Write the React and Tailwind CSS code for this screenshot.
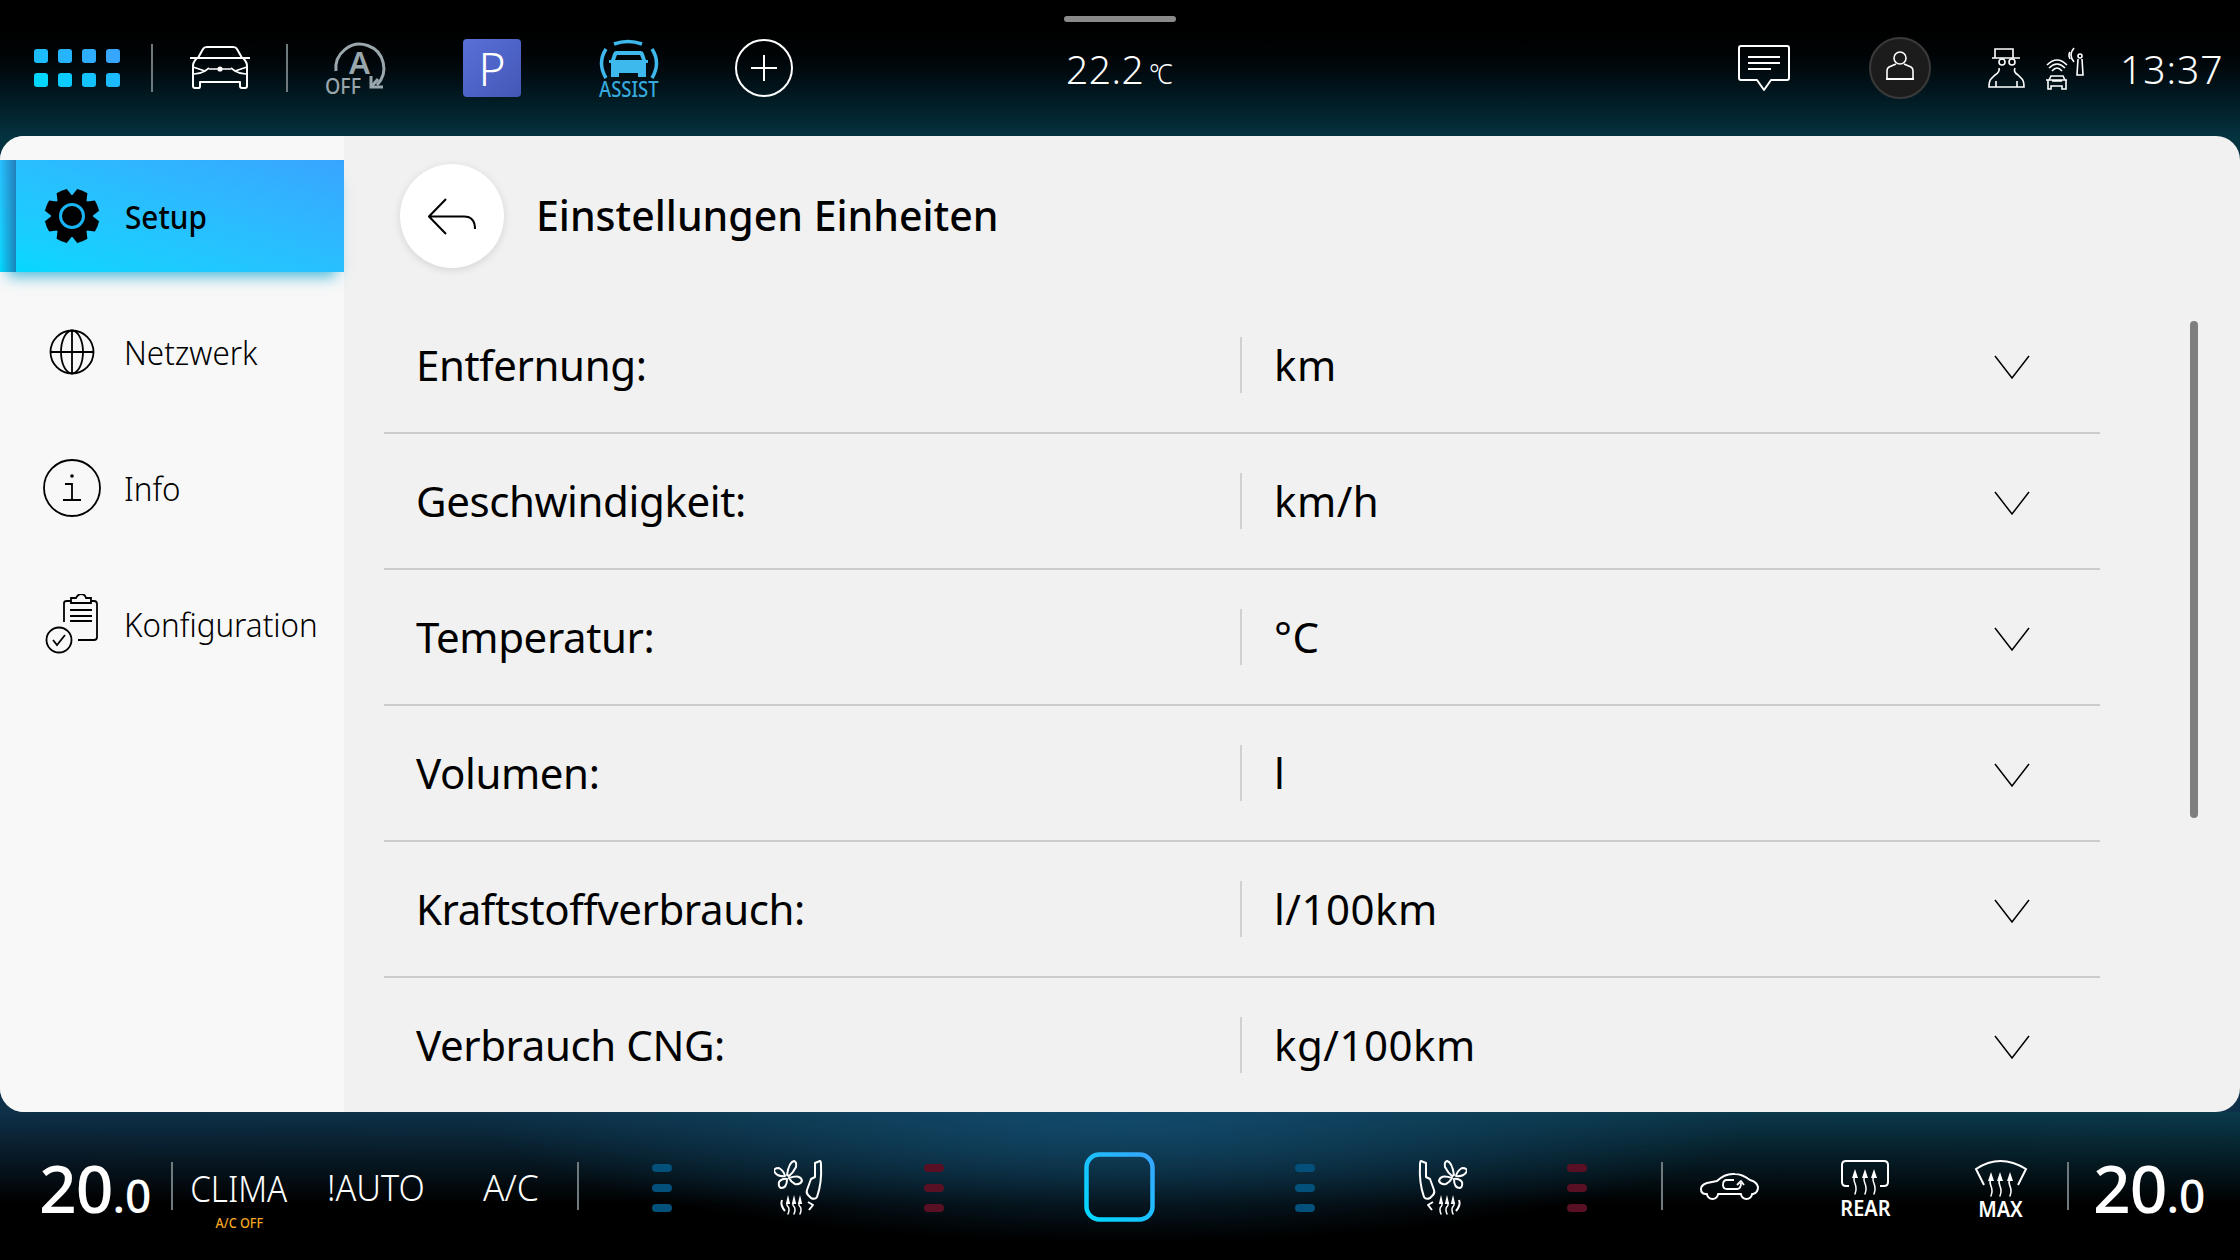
import React from 'react';

const rows = [
    ['Entfernung:', 'km'],
    ['Geschwindigkeit:', 'km/h'],
    ['Temperatur:', '°C'],
    ['Volumen:', 'l'],
    ['Kraftstoffverbrauch:', 'l/100km'],
    ['Verbrauch CNG:', 'kg/100km'],
];

const Sep = ({ ml }) => <div className={`w-[2px] h-[48px] bg-[#6f7a7e] ${ml}`} />;

const HeatArrow = ({ x, top, bottom, head = 3 }) => (
    <g>
        <path d={`M${x} ${top + 7} C${x - 4} ${top + 13} ${x + 4} ${bottom - 10} ${x} ${bottom}`} fill="none" stroke="white" strokeWidth="1.5" strokeLinecap="round" />
        <path d={`M${x} ${top} L${x + head} ${top + 9} H${x - head} Z`} fill="white" stroke="none" />
    </g>
);

const CarFront = () => (
    <svg width="60" height="44" viewBox="0 0 60 44" fill="none" stroke="white" strokeWidth="2" strokeLinejoin="round">
        <path d="M8 12 L13 3 Q14 1 17 1 H43 Q46 1 47 3 L52 12" />
        <path d="M0 12 H60" />
        <path d="M7 12 Q3 16 3 20 V40 Q3 42 5 42 H9 Q10 42 10 40 V36 H50 V40 Q50 42 52 42 H55 Q57 42 57 40 V20 Q57 16 53 12" />
        <path d="M3 21 L15 25 L19 22 M57 21 L45 25 L41 22 M19 23 H41 M4 28 Q10 28 15 25 M56 28 Q50 28 45 25" strokeWidth="1.6" />
        <circle cx="30" cy="23" r="2.6" fill="white" stroke="none" />
    </svg>
);

const AutoOff = () => (
    <svg width="62" height="54" viewBox="326 40 62 54" fill="none" stroke="#9aa7ad" className="overflow-visible">
        <path d="M338 70 A24 24 0 1 1 379 84" strokeWidth="3" />
        <path d="M373 75 V86 H385" strokeWidth="3" />
        <path d="M373 86 L380 78" strokeWidth="3" />
        <text x="351" y="73" fontSize="30" fontWeight="600" fill="#9aa7ad" stroke="none" textLength="21" lengthAdjust="spacingAndGlyphs">A</text>
        <text x="327" y="93" fontSize="21" fontWeight="500" fill="#9aa7ad" stroke="none" textLength="36" lengthAdjust="spacingAndGlyphs">OFF</text>
    </svg>
);

const AssistIcon = () => (
    <svg width="62" height="42" viewBox="598 36 62 42" fill="none" stroke="#3db9ee" strokeWidth="3.5">
        <path d="M614 42 Q628 37 642 42" />
        <path d="M606 47 Q597 61 606 76 M652 47 Q661 61 652 76" />
        <path d="M616 49 H641 Q643 49 644 52 L646 58 H648 V61 H646 V75 H638 V71 H619 V75 H611 V61 H609 V58 H611 L613 52 Q614 49 616 49 Z M617 53 L615 58 H642 L640 53 Z" fill="#3db9ee" fillRule="evenodd" stroke="none" />
    </svg>
);

const MessageIcon = () => (
    <svg width="52" height="47" viewBox="8 20 52 47" fill="none" stroke="white" strokeWidth="2" strokeLinejoin="round">
        <path d="M11 21 H57 Q59 21 59 23 V53 Q59 55 57 55 H41 L34 65 L27 55 H11 Q9 55 9 53 V23 Q9 21 11 21 Z" />
        <path d="M18 32 H50 M18 38 H50 M18 44 H41" />
    </svg>
);

const AvatarIcon = () => (
    <svg width="32" height="36" viewBox="15 17 32 36" fill="none" stroke="white" strokeWidth="1.6">
        <circle cx="31" cy="25" r="6" />
        <path d="M27 31 L20 34 Q18 35 18 38 V46 M35 31 L42 34 Q44 35 44 38 V46" />
        <path d="M17 46 H45" strokeWidth="2" />
    </svg>
);

const SpyIcon = () => (
    <svg width="38" height="42" viewBox="257 22 38 42" fill="none" stroke="white" strokeWidth="1.6">
        <path d="M265 33 V24 H283 V33 M262 33 H290" />
        <circle cx="272" cy="37" r="3" />
        <circle cx="282" cy="37" r="3" />
        <path d="M269 43 Q270 47 265 50 L261 54 Q259 56 259 62 H294 Q294 56 292 54 L288 50 Q283 47 285 43" />
        <path d="M266 56 V62 M287 56 V62" />
    </svg>
);

const CarWifiIcon = () => (
    <svg width="42" height="44" viewBox="316 20 42 44" fill="none" stroke="white" strokeWidth="1.6">
        <path d="M323 45 Q328 39 333 45 M320 42 Q328 34 336 42 M318 39 Q328 29 338 39" />
        <path d="M322 50 H334 L336 54 H338 H317 H320 Z M319 54 V63 H322 V60 H333 V63 H337 V54 M323 55 H333" />
        <circle cx="351" cy="30" r="2" />
        <path d="M349 33 L348 49 H354 L353 33" />
        <path d="M345 22 Q339 29 345 36 M341 26 Q339 29 341 33" />
    </svg>
);

const Gear = () => (
    <svg width="56" height="56" viewBox="-28 -28 56 56">
        <circle r="21" fill="black" />
        {[0, 45, 90, 135, 180, 225, 270, 315].map((a) => (
            <path key={a} d="M-8 -18 L-5.5 -27 Q0 -28 5.5 -27 L8 -18 Z" fill="black" transform={`rotate(${a + 22.5})`} />
        ))}
        <circle r="11.5" fill="black" stroke="#1ab4f5" strokeWidth="3" />
    </svg>
);

const Globe = () => (
    <svg width="46" height="46" viewBox="-23 -23 46 46" fill="none" stroke="black" strokeWidth="1.8">
        <circle r="21.5" />
        <ellipse rx="11" ry="21.5" />
        <path d="M0 -21.5 V21.5 M-21.5 0 H21.5" />
    </svg>
);

const InfoIcon = () => (
    <svg width="58" height="58" viewBox="-29 -29 58 58" fill="none" stroke="black" strokeWidth="1.8">
        <circle r="28" />
        <circle cy="-12" r="1.8" fill="black" stroke="none" />
        <path d="M-7 -4 H0 V12 M-9 12 H9" />
    </svg>
);

const ClipboardIcon = () => (
    <svg width="54" height="60" viewBox="43 174 54 60" fill="none" stroke="black" strokeWidth="1.8">
        <path d="M62 202 V183 Q62 181 65 181 H69 V178 H74 Q76 174 79 174 Q83 174 84 178 H89 V181 H92 Q95 181 95 184 V217 Q95 220 92 220 H76" />
        <path d="M69 181 V183 H89 V181" />
        <path d="M68 190 H90 M68 196 H90 M68 201 H90" />
        <circle cx="57" cy="220" r="12.5" />
        <path d="M51 220 L55 225 L63 215" />
    </svg>
);

const ChevronDown = () => (
    <svg width="36" height="24" viewBox="0 0 36 24" fill="none" stroke="black" strokeWidth="1.5">
        <path d="M1 1 L18 23 L35 1" />
    </svg>
);

const BackArrow = () => (
    <svg width="49" height="37" viewBox="0 0 49 37" fill="none" stroke="black" strokeWidth="2">
        <path d="M18 1 L1 18.5 L18 36 M1 18.5 H36 Q47 18.5 47 31" />
    </svg>
);

const FanIcon = ({ flip }) => (
    <svg width="55" height="60" viewBox="15 8 55 60" fill="none" stroke="white" strokeWidth="2" strokeLinejoin="round" className={flip ? '-scale-x-100' : ''}>
        <path d="M28 27 Q30 14 35 13 Q38 14 37 19 Q34 25 30 28 Z" />
        <path d="M30 30 Q42 26 43 33 Q41 37 36 36 Q32 34 30 30 Z" />
        <path d="M28 31 Q28 40 22 40 Q19 39 20 34 Q23 30 28 31 Z" />
        <path d="M26 28 Q18 29 15 23 Q15 20 20 20 Q25 23 26 28 Z" />
        <path d="M56 15 L61 13 Q62 13 62 17 Q63 35 58 49 Q56 52 52 50 L49 47 Q47 45 48 42 L52 31 L56 29 Z" />
        <path d="M49 54 L54 57 L50 62 M23 52 Q21 57 26 63" />
        <HeatArrow x={29} top={47} bottom={66} head={2.2} />
        <HeatArrow x={35} top={47} bottom={66} head={2.2} />
        <HeatArrow x={41} top={47} bottom={66} head={2.2} />
    </svg>
);

const RecircIcon = () => (
    <svg width="61" height="30" viewBox="19 27 61 30" fill="none" stroke="white" strokeWidth="2" strokeLinejoin="round">
        <path d="M26 50 Q21 50 21 45 Q21 41 27 39 L37 37 Q45 29 55 30 Q62 30 70 36 Q77 38 78 43 Q78 49 73 50 H72 A5.5 5 0 0 1 61 50 H38 A5.5 5 0 0 1 27 50 Z" />
        <path d="M54 36 H47 Q43 36 43 41 Q43 45 47 45 H57 Q61 45 61 39" strokeWidth="1.8" />
        <path d="M57 41 L61 37 L64 41" strokeWidth="1.8" />
    </svg>
);

const RearIcon = () => (
    <svg width="50" height="38" viewBox="160 15 50 38" fill="none" stroke="white" strokeWidth="2">
        <path d="M169 42 H166 Q162 42 162 38 V21 Q162 17 166 17 H204 Q208 17 208 21 V38 Q208 42 204 42 H200" />
        <HeatArrow x={175} top={25} bottom={50} />
        <HeatArrow x={185} top={25} bottom={50} />
        <HeatArrow x={194} top={25} bottom={50} />
    </svg>
);

const MaxIcon = () => (
    <svg width="56" height="40" viewBox="293 12 56 40" fill="none" stroke="white" strokeWidth="2">
        <path d="M304 39 L296 23 Q320 7 346 23 L338 39" />
        <HeatArrow x={311} top={26} bottom={50} />
        <HeatArrow x={320} top={26} bottom={50} />
        <HeatArrow x={330} top={26} bottom={50} />
    </svg>
);

const SyncButton = () => (
    <svg width="71" height="70" viewBox="0 0 71 70" fill="none">
        <defs>
            <linearGradient id="syncGrad" x1="0" y1="1" x2="1" y2="0">
                <stop offset="0" stopColor="#00d9ff" />
                <stop offset="1" stopColor="#38a5ff" />
            </linearGradient>
        </defs>
        <rect x="2.5" y="2.5" width="66" height="65" rx="13" stroke="url(#syncGrad)" strokeWidth="4.5" />
    </svg>
);

const HeatDots = ({ color, ml, w = 'w-[20px]' }) => (
    <div className={`flex flex-col gap-[12px] mt-[3px] ${ml}`}>
        <div className={`${w} h-[8px] rounded-full ${color}`} />
        <div className={`${w} h-[8px] rounded-full ${color}`} />
        <div className={`${w} h-[8px] rounded-full ${color}`} />
    </div>
);

const Temp = ({ ml }) => (
    <div className={`${ml} w-[112px] mt-[2px] flex items-baseline text-white whitespace-nowrap`}>
        <span className="text-[66px] font-medium leading-none tracking-[-1px]">20</span>
        <span className="text-[46px] font-medium leading-none">.0</span>
    </div>
);

const SideItem = ({ icon, label }) => (
    <div className="h-[136px] flex items-center">
        <div className="w-[60px] ml-[42px] mr-[22px] flex justify-center">{icon}</div>
        <span className="pt-[2px] text-[33px] font-light text-black whitespace-nowrap scale-x-[0.95] origin-left">{label}</span>
    </div>
);

const App = () => {
    return (
        <div className="relative w-[2240px] h-[1260px] flex flex-col overflow-hidden bg-black font-['Noto_Sans',sans-serif]">
            {/* Top bar */}
            <header className="relative h-[136px] shrink-0 flex items-center bg-gradient-to-b from-black from-10% to-[#04323f]">
                <div className="absolute left-[1064px] top-[16px] w-[112px] h-[6px] rounded-full bg-[#8a8a8a]" />
                <div className="ml-[34px] w-[86px] grid grid-cols-4 gap-x-[10px] gap-y-[10px]">
                    <div className="h-[14px] rounded-[3px] bg-[#1cbcff]" />
                    <div className="h-[14px] rounded-[3px] bg-[#26b4ff]" />
                    <div className="h-[14px] rounded-[3px] bg-[#2eadff]" />
                    <div className="h-[14px] rounded-[3px] bg-[#36a6ff]" />
                    <div className="h-[14px] rounded-[3px] bg-[#02d6ff]" />
                    <div className="h-[14px] rounded-[3px] bg-[#0ccbff]" />
                    <div className="h-[14px] rounded-[3px] bg-[#14c2ff]" />
                    <div className="h-[14px] rounded-[3px] bg-[#1cbaff]" />
                </div>
                <Sep ml="ml-[31px]" />
                <div className="ml-[37px]"><CarFront /></div>
                <Sep ml="ml-[36px]" />
                <div className="ml-[36px]"><AutoOff /></div>
                <div className="ml-[77px] w-[58px] h-[58px] rounded-[4px] bg-gradient-to-br from-[#5a70d8] to-[#4357b6] flex items-center justify-center text-white text-[46px] font-light leading-none">P</div>
                <div className="ml-[78px] w-[60px] flex flex-col items-center">
                    <AssistIcon />
                    <span className="text-[#37aadd] text-[21px] font-medium leading-[18px] whitespace-nowrap scale-x-[0.88]">ASSIST</span>
                </div>
                <div className="ml-[76px] w-[58px] h-[58px] rounded-full border-2 border-white flex items-center justify-center">
                    <svg width="26" height="26" viewBox="0 0 26 26" stroke="white" strokeWidth="2"><path d="M13 0 V26 M0 13 H26" /></svg>
                </div>
                <div className="ml-[273px] w-[109px] flex items-baseline text-white whitespace-nowrap">
                    <span className="text-[39px] font-light leading-none tracking-[0.5px]">22.2</span>
                    <span className="text-[28px] leading-none ml-[5px] font-light tracking-[-3px] scale-x-[0.9] origin-left">°C</span>
                </div>
                <div className="ml-[563px]"><MessageIcon /></div>
                <div className="ml-[79px] w-[62px] h-[62px] rounded-full bg-[#1c1c1c] border-2 border-[#3a3a3a] flex items-center justify-center"><AvatarIcon /></div>
                <div className="ml-[56px]"><SpyIcon /></div>
                <div className="ml-[20px]"><CarWifiIcon /></div>
                <span className="ml-[33px] text-white text-[39px] font-light leading-none tracking-[1px]">13:37</span>
            </header>

            {/* Main panel */}
            <div className="h-[976px] shrink-0 bg-gradient-to-b from-[#04323f] to-[#0e3049]">
                <main className="relative h-full flex rounded-[24px] overflow-hidden bg-[#f1f1f1]">
                    <aside className="w-[344px] shrink-0 bg-[#f8f8f8] pt-[12px]">
                        <div className="h-[136px] flex items-center">
                            <div className="relative w-full h-[112px] flex items-center bg-gradient-to-tr from-[#00d9ff] to-[#38a5ff] shadow-[0_12px_14px_-8px_rgba(0,160,210,0.75)]">
                                <div className="absolute left-0 top-0 w-[16px] h-full bg-gradient-to-r from-transparent to-[#1f6fa8]/80" />
                                <div className="w-[60px] ml-[42px] mr-[23px] flex justify-center"><Gear /></div>
                                <span className="pt-[1px] text-[33px] font-medium text-black whitespace-nowrap scale-x-[0.9] origin-left">Setup</span>
                            </div>
                        </div>
                        <SideItem icon={<Globe />} label="Netzwerk" />
                        <SideItem icon={<InfoIcon />} label="Info" />
                        <SideItem icon={<ClipboardIcon />} label="Konfiguration" />
                    </aside>

                    <section className="flex-1 min-w-0">
                        <div className="h-[162px] flex items-center pl-[56px] pb-[2px]">
                            <div className="w-[104px] h-[104px] rounded-full bg-white shadow-[0_2px_8px_rgba(0,0,0,0.12)] flex items-center justify-center"><BackArrow /></div>
                            <h1 className="ml-[32px] text-[41px] font-medium text-black whitespace-nowrap">Einstellungen Einheiten</h1>
                        </div>
                        <div className="ml-[40px] w-[1716px]">
                            {rows.map(([label, value]) => (
                                <div key={label} className="h-[136px] flex items-center border-b-2 border-[#cccccc]">
                                    <div className="w-[856px] pb-[1px] pl-[32px] text-[42px] tracking-[-0.4px] text-black whitespace-nowrap">{label}</div>
                                    <div className="w-[2px] h-[56px] bg-[#d0d0d0]" />
                                    <div className="ml-[32px] pb-[1px] flex-1 text-[42px] tracking-[0.5px] text-black whitespace-nowrap">{value}</div>
                                    <div className="mr-[70px] mt-[3px]"><ChevronDown /></div>
                                </div>
                            ))}
                        </div>
                    </section>

                    {/* Scrollbar */}
                    <div className="absolute left-[2190px] top-[185px] w-[8px] h-[497px] rounded-full bg-[#7f7f7f]" />
                </main>
            </div>

            {/* Climate bar */}
            <footer className="h-[148px] shrink-0 flex items-center bg-[radial-gradient(ellipse_640px_130px_at_1120px_0px,#124a6b_0%,transparent_100%),linear-gradient(to_bottom,transparent,black_62%),linear-gradient(to_right,#0e3049,#0a3a4b)]">
                <Temp ml="ml-[39px]" />
                <Sep ml="ml-[20px]" />
                <div className="ml-[17px] mt-[27px] w-[98px] flex flex-col items-center text-white">
                    <span className="text-[36px] font-light leading-[40px] whitespace-nowrap scale-x-[0.92]">CLIMA</span>
                    <span className="mt-[5px] text-[15px] font-medium leading-[16px] text-[#f5a623] whitespace-nowrap scale-x-[0.84]">A/C OFF</span>
                </div>
                <span className="ml-[39px] mt-[4px] w-[96px] text-[36px] font-light text-white whitespace-nowrap scale-x-[0.95] origin-left">!AUTO</span>
                <span className="ml-[60px] mt-[4px] w-[55px] text-[36px] font-light text-white whitespace-nowrap scale-x-[0.98] origin-left">A/C</span>
                <Sep ml="ml-[39px]" />
                <HeatDots color="bg-[#03507a]" ml="ml-[73px]" />
                <div className="ml-[102px]"><FanIcon /></div>
                <HeatDots color="bg-[#5a1024]" ml="ml-[95px]" />
                <div className="ml-[140px] mt-[2px]"><SyncButton /></div>
                <HeatDots color="bg-[#03507a]" ml="ml-[140px]" />
                <div className="ml-[97px]"><FanIcon flip /></div>
                <HeatDots color="bg-[#5a1024]" ml="ml-[100px]" />
                <Sep ml="ml-[74px]" />
                <div className="ml-[36px]"><RecircIcon /></div>
                <div className="ml-[80px] w-[50px] mt-[6px] flex flex-col items-center">
                    <RearIcon />
                    <span className="text-[21px] font-semibold leading-[22px] text-white scale-x-[0.95]">REAR</span>
                </div>
                <div className="ml-[83px] w-[56px] mt-[6px] flex flex-col items-center">
                    <MaxIcon />
                    <span className="text-[21px] font-semibold leading-[22px] text-white scale-x-[0.95]">MAX</span>
                </div>
                <Sep ml="ml-[38px]" />
                <Temp ml="ml-[24px]" />
            </footer>
        </div>
    );
};

export default App;
